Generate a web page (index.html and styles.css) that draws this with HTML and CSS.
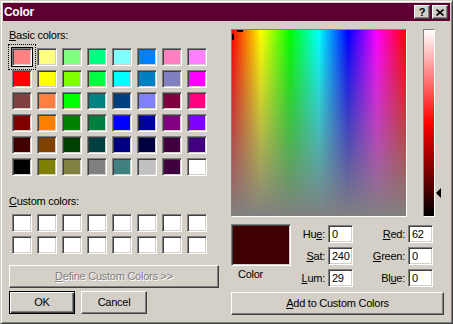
FILE: index.html
```html
<!DOCTYPE html>
<html>
<head>
<meta charset="utf-8">
<title>Color</title>
<link rel="stylesheet" href="styles.css">
</head>
<body>
<div class="window">
  <div class="titlebar">
    <span class="title">Color</span>
    <div class="tbtns">
      <span class="tbtn help">?</span>
      <span class="tbtn close"><svg width="8" height="7" viewBox="0 0 8 7"><path d="M0.5 0.5 L7.5 6.5 M7.5 0.5 L0.5 6.5" stroke="#000" stroke-width="1.6" fill="none"/></svg></span>
    </div>
  </div>
  <div class="content">
    <div class="left">
      <div class="label"><u>B</u>asic colors:</div>
      <div class="swatches basic">
        <span class="sw selected" style="background:#ff8080"></span>
        <span class="sw" style="background:#ffff80"></span>
        <span class="sw" style="background:#80ff80"></span>
        <span class="sw" style="background:#00ff80"></span>
        <span class="sw" style="background:#80ffff"></span>
        <span class="sw" style="background:#0080ff"></span>
        <span class="sw" style="background:#ff80c0"></span>
        <span class="sw" style="background:#ff80ff"></span>

        <span class="sw" style="background:#ff0000"></span>
        <span class="sw" style="background:#ffff00"></span>
        <span class="sw" style="background:#80ff00"></span>
        <span class="sw" style="background:#00ff40"></span>
        <span class="sw" style="background:#00ffff"></span>
        <span class="sw" style="background:#0080c0"></span>
        <span class="sw" style="background:#8080c0"></span>
        <span class="sw" style="background:#ff00ff"></span>

        <span class="sw" style="background:#804040"></span>
        <span class="sw" style="background:#ff8040"></span>
        <span class="sw" style="background:#00ff00"></span>
        <span class="sw" style="background:#008080"></span>
        <span class="sw" style="background:#004080"></span>
        <span class="sw" style="background:#8080ff"></span>
        <span class="sw" style="background:#800040"></span>
        <span class="sw" style="background:#ff0080"></span>

        <span class="sw" style="background:#800000"></span>
        <span class="sw" style="background:#ff8000"></span>
        <span class="sw" style="background:#008000"></span>
        <span class="sw" style="background:#008040"></span>
        <span class="sw" style="background:#0000ff"></span>
        <span class="sw" style="background:#0000a0"></span>
        <span class="sw" style="background:#800080"></span>
        <span class="sw" style="background:#8000ff"></span>

        <span class="sw" style="background:#400000"></span>
        <span class="sw" style="background:#804000"></span>
        <span class="sw" style="background:#004000"></span>
        <span class="sw" style="background:#004040"></span>
        <span class="sw" style="background:#000080"></span>
        <span class="sw" style="background:#000040"></span>
        <span class="sw" style="background:#400040"></span>
        <span class="sw" style="background:#400080"></span>

        <span class="sw" style="background:#000000"></span>
        <span class="sw" style="background:#808000"></span>
        <span class="sw" style="background:#808040"></span>
        <span class="sw" style="background:#808080"></span>
        <span class="sw" style="background:#408080"></span>
        <span class="sw" style="background:#c0c0c0"></span>
        <span class="sw" style="background:#400040"></span>
        <span class="sw" style="background:#ffffff"></span>
      </div>
      <div class="label custom-label"><u>C</u>ustom colors:</div>
      <div class="swatches custom">
        <span class="sw"></span><span class="sw"></span><span class="sw"></span><span class="sw"></span>
        <span class="sw"></span><span class="sw"></span><span class="sw"></span><span class="sw"></span>
        <span class="sw"></span><span class="sw"></span><span class="sw"></span><span class="sw"></span>
        <span class="sw"></span><span class="sw"></span><span class="sw"></span><span class="sw"></span>
      </div>
      <button class="btn define" disabled><u>D</u>efine Custom Colors &gt;&gt;</button>
      <div class="okrow">
        <button class="btn default">OK</button>
        <button class="btn cancel">Cancel</button>
      </div>
    </div>
    <div class="right">
      <div class="picker">
        <div class="spectrum">
          <span class="cross horiz"></span>
          <span class="cross vert"></span>
        </div>
        <div class="lumwrap">
          <div class="lum"></div>
          <span class="arrow"></span>
        </div>
      </div>
      <div class="values">
        <div class="colorsec">
          <div class="solid"></div>
          <div class="clabel">Color</div>
        </div>
        <div class="fields">
          <span class="flabel">Hu<u>e</u>:</span><span class="field">0</span>
          <span class="flabel"><u>R</u>ed:</span><span class="field">62</span>
          <span class="flabel"><u>S</u>at:</span><span class="field">240</span>
          <span class="flabel"><u>G</u>reen:</span><span class="field">0</span>
          <span class="flabel"><u>L</u>um:</span><span class="field">29</span>
          <span class="flabel">Bl<u>u</u>e:</span><span class="field">0</span>
        </div>
      </div>
      <button class="btn add"><u>A</u>dd to Custom Colors</button>
    </div>
  </div>
</div>
</body>
</html>
```
FILE: styles.css
```css
html, body {
  margin: 0;
  padding: 0;
  background: #d4d0c8;
}

.window {
  width: 453px;
  height: 324px;
  box-sizing: border-box;
  background: #d4d0c8;
  border: 1px solid;
  border-color: #d4d0c8 #404040 #404040 #d4d0c8;
  box-shadow: inset 1px 1px #ffffff, inset -1px -1px #808080;
  padding: 2px;
  font-family: "Liberation Sans", Arial, sans-serif;
  font-size: 11px;
  letter-spacing: -0.25px;
  color: #000;
}

.titlebar {
  height: 18px;
  background: #5e0032;
  display: flex;
  align-items: center;
  justify-content: space-between;
  padding: 0 2px 0 1px;
}

.title {
  color: #fff;
  font-weight: bold;
  font-size: 12px;
  letter-spacing: -0.3px;
  line-height: 18px;
}

.tbtns {
  display: flex;
  gap: 2px;
}

.tbtn {
  width: 16px;
  height: 14px;
  box-sizing: border-box;
  background: #d4d0c8;
  border: 1px solid;
  border-color: #ffffff #404040 #404040 #ffffff;
  box-shadow: inset -1px -1px #808080;
  display: flex;
  align-items: center;
  justify-content: center;
  font-weight: bold;
  font-size: 11px;
  line-height: 12px;
  letter-spacing: 0;
}

.tbtn.close svg {
  display: block;
  margin-top: 0;
}

.content {
  display: flex;
  padding: 8px 0 0 6px;
}

.left {
  width: 210px;
  display: flex;
  flex-direction: column;
}

.label {
  line-height: 13px;
  height: 13px;
}

.swatches {
  display: grid;
  grid-template-columns: repeat(8, 20px);
  grid-auto-rows: 18px;
  column-gap: 5px;
  row-gap: 4px;
  padding-left: 3px;
}

.swatches.basic {
  margin-top: 6px;
}

.custom-label {
  margin-top: 19px;
}

.swatches.custom {
  margin-top: 6px;
}

.sw {
  display: block;
  position: relative;
  box-sizing: border-box;
  width: 20px;
  height: 18px;
  background: #fff;
  border: 1px solid;
  border-color: #808080 #ffffff #ffffff #808080;
  box-shadow: inset 1px 1px #404040, inset -1px -1px #d4d0c8;
}

.sw.selected {
  box-shadow: inset 1px 1px #404040, inset -1px -1px #d4d0c8, 0 0 0 1px #000;
}

.sw.selected::after {
  content: "";
  position: absolute;
  left: -5px;
  top: -5px;
  right: -5px;
  bottom: -5px;
  border: 1px dotted #000;
}

.btn {
  font-family: "Liberation Sans", Arial, sans-serif;
  font-size: 11px;
  letter-spacing: -0.25px;
  color: #000;
  background: #d4d0c8;
  height: 23px;
  box-sizing: border-box;
  margin: 0;
  padding: 0;
  border: 1px solid;
  border-color: #ffffff #404040 #404040 #ffffff;
  box-shadow: inset -1px -1px #808080, inset 1px 1px #d4d0c8;
  line-height: 19px;
  text-align: center;
}

.btn u {
  text-decoration: underline;
}

.define {
  width: 210px;
  margin-top: 11px;
  color: #808080;
  text-shadow: 1px 1px #ffffff;
}

.okrow {
  display: flex;
  gap: 6px;
  margin-top: 3px;
}

.default {
  width: 66px;
  border: 1px solid #000;
  box-shadow: inset 1px 1px #ffffff, inset -1px -1px #404040, inset -2px -2px #808080;
}

.cancel {
  width: 66px;
}

.right {
  margin-left: 12px;
  width: 215px;
  display: flex;
  flex-direction: column;
}

.picker {
  display: flex;
  align-items: flex-start;
}

.spectrum {
  position: relative;
  width: 176px;
  height: 188px;
  box-sizing: border-box;
  border: 1px solid;
  border-color: #808080 #ffffff #ffffff #808080;
  background:
    linear-gradient(to bottom, rgba(128, 128, 128, 0), #808080),
    linear-gradient(to right, #ff0000, #ffff00 16.67%, #00ff00 33.33%, #00ffff 50%, #0000ff 66.67%, #ff00ff 83.33%, #ff0000);
  overflow: hidden;
}

.cross {
  position: absolute;
  background: #000;
}

.cross.horiz {
  left: 5px;
  top: 0;
  width: 6px;
  height: 2px;
}

.cross.vert {
  left: 0;
  top: 4px;
  width: 2px;
  height: 6px;
}

.lumwrap {
  position: relative;
  margin-left: 16px;
  width: 12px;
  height: 188px;
}

.lum {
  width: 12px;
  height: 188px;
  box-sizing: border-box;
  border: 1px solid;
  border-color: #808080 #ffffff #ffffff #808080;
  background: linear-gradient(to bottom, #ffffff, #ff0000 50%, #000000);
}

.arrow {
  position: absolute;
  left: 13px;
  top: 159px;
  width: 0;
  height: 0;
  border-top: 5px solid transparent;
  border-bottom: 5px solid transparent;
  border-right: 5px solid #000;
}

.values {
  display: flex;
  margin-top: 7px;
}

.colorsec {
  width: 60px;
}

.solid {
  width: 60px;
  height: 42px;
  box-sizing: border-box;
  border: 1px solid;
  border-color: #808080 #ffffff #ffffff #808080;
  box-shadow: inset 1px 1px #404040, inset -1px -1px #d4d0c8;
  background: #3e0000;
}

.clabel {
  margin-top: 2px;
  line-height: 13px;
  padding-left: 7px;
}

.fields {
  margin-left: 3px;
  margin-top: 1px;
  display: grid;
  grid-template-columns: 31px 25px 49px 25px;
  grid-auto-rows: 18px;
  column-gap: 3px;
  row-gap: 4px;
}

.flabel {
  text-align: right;
  line-height: 18px;
  white-space: nowrap;
}

.field {
  box-sizing: border-box;
  height: 18px;
  background: #fff;
  border: 1px solid;
  border-color: #808080 #ffffff #ffffff #808080;
  box-shadow: inset 1px 1px #404040, inset -1px -1px #d4d0c8;
  padding-left: 3px;
  line-height: 16px;
}

.add {
  width: 213px;
  margin-top: 5px;
}
```
